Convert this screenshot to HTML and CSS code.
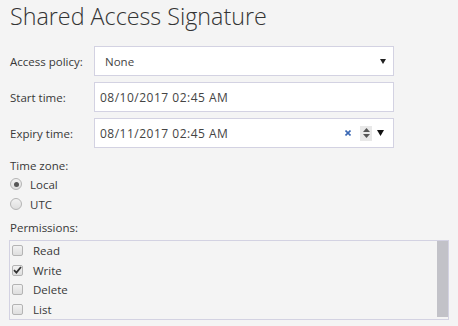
FILE: index.html
```html
<!DOCTYPE html>
<html>
<head>
<meta charset="utf-8">
<link rel="stylesheet" href="styles.css">
</head>
<body>
<div class="page">
  <h1 class="title">Shared Access Signature</h1>
  <div class="fields">
    <div class="row">
      <span class="label">Access policy:</span>
      <div class="box select">
        <span class="value sel-value">None</span>
        <svg class="arrow" width="6" height="5" viewBox="0 0 6 5"><path d="M0 0H6L3 5Z" fill="#222"/></svg>
      </div>
    </div>
    <div class="row">
      <span class="label">Start time:</span>
      <div class="box"><span class="value date">08/10/2017 02:45 AM</span></div>
    </div>
    <div class="row">
      <span class="label">Expiry time:</span>
      <div class="box">
        <span class="value date">08/11/2017 02:45 AM</span>
        <span class="controls">
          <svg class="clear" width="6" height="6" viewBox="0 0 6 6"><path d="M0.5 0.5L5.5 5.5M5.5 0.5L0.5 5.5" stroke="#3a68b4" stroke-width="1.6"/></svg>
          <span class="spin">
            <svg width="7" height="4" viewBox="0 0 7 4"><path d="M0 4H7L3.5 0Z" fill="#555"/></svg>
            <svg width="7" height="4" viewBox="0 0 7 4"><path d="M0 0H7L3.5 4Z" fill="#555"/></svg>
          </span>
          <svg class="drop" width="7" height="6" viewBox="0 0 7 6"><path d="M0 0H7L3.5 6Z" fill="#111"/></svg>
        </span>
      </div>
    </div>
  </div>
  <div class="section-label tz">Time zone:</div>
  <div class="radio-row"><span class="radio checked"><span class="dot"></span></span><span>Local</span></div>
  <div class="radio-row"><span class="radio"></span><span>UTC</span></div>
  <div class="section-label perm">Permissions:</div>
  <div class="perm-box">
    <div class="perm-list">
      <div class="check-row"><span class="check"></span><span>Read</span></div>
      <div class="check-row"><span class="check"><svg width="9" height="8" viewBox="0 0 9 8"><path d="M1 4.2L3.4 6.6L8 1" fill="none" stroke="#333" stroke-width="1.8"/></svg></span><span>Write</span></div>
      <div class="check-row"><span class="check"></span><span>Delete</span></div>
      <div class="check-row"><span class="check"></span><span>List</span></div>
    </div>
    <div class="scrollbar"></div>
  </div>
</div>
</body>
</html>
```
FILE: styles.css
```css
html, body {
  margin: 0;
  padding: 0;
  background: #f4f4f4;
}
body {
  font-family: "Open Sans", "Noto Sans", sans-serif;
  font-size: 11.5px;
  color: #383838;
}
.page {
  width: 458px;
  height: 326px;
  padding: 0 0 0 10px;
  box-sizing: border-box;
  overflow: hidden;
}
.title {
  margin: 0;
  padding-top: 0;
  font-weight: 300;
  font-size: 23.3px;
  line-height: 33px;
  color: #333;
}
.fields {
  margin-top: 13px;
  display: flex;
  flex-direction: column;
  gap: 6px;
}
.row {
  display: flex;
  align-items: center;
  height: 30px;
}
.label {
  width: 84px;
  flex: none;
}
.box {
  width: 300px;
  height: 30px;
  box-sizing: border-box;
  border: 1px solid #d3d2e2;
  background: #fff;
  display: flex;
  align-items: center;
  padding-left: 5px;
  padding-right: 9px;
  color: #444;
}
.value {
  flex: 1;
}
.date {
  font-size: 12px;
  letter-spacing: 0.5px;
}
.sel-value {
  padding-left: 5px;
}
.select .arrow {
  margin-right: -2px;
}
.controls {
  display: flex;
  align-items: center;
}
.clear {
  margin-right: 9px;
}
.spin {
  width: 12px;
  height: 15px;
  background: #e8e8e8;
  display: flex;
  flex-direction: column;
  align-items: center;
  justify-content: center;
  gap: 2px;
  margin-right: 5px;
}
.section-label {
  line-height: 16px;
}
.tz {
  margin-top: 10px;
}
.radio-row {
  display: flex;
  align-items: center;
  height: 20px;
}
.radio {
  width: 12px;
  height: 12px;
  box-sizing: border-box;
  border-radius: 50%;
  border: 1px solid #b4b4b4;
  background: linear-gradient(#f2f2f2, #dedede);
  margin-right: 8px;
  display: flex;
  align-items: center;
  justify-content: center;
}
.radio .dot {
  width: 5px;
  height: 5px;
  border-radius: 50%;
  background: #555;
}
.perm {
  margin-top: 6px;
}
.perm-box {
  margin-top: 4px;
  width: 440px;
  height: 80px;
  box-sizing: border-box;
  border: 1px solid #d3d2e2;
  display: flex;
  margin-left: -1px;
}
.perm-list {
  flex: 1;
  display: flex;
  flex-direction: column;
}
.check-row {
  display: flex;
  align-items: center;
  height: 20px;
  padding-left: 2px;
}
.check {
  width: 11px;
  height: 11px;
  box-sizing: border-box;
  border: 1px solid #b4b4b4;
  border-radius: 2px;
  background: linear-gradient(#f2f2f2, #dedede);
  margin-right: 10px;
  display: flex;
  align-items: center;
  justify-content: center;
}
.scrollbar {
  width: 11px;
  height: 76px;
  background: #c2c2c8;
  align-self: flex-start;
}
```
